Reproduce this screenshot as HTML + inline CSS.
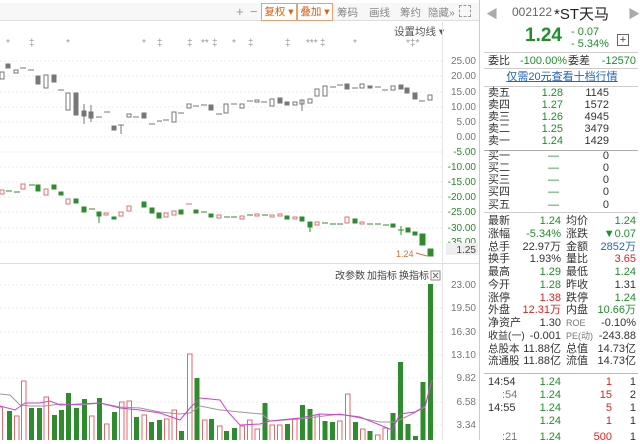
<!DOCTYPE html>
<html><head><meta charset="utf-8"><style>
body{margin:0;width:640px;height:440px;overflow:hidden;background:#fff;font-family:"Liberation Sans","Noto Sans CJK SC",sans-serif;position:relative}
.a{position:absolute;white-space:nowrap}
.tb{font-size:11px;color:#888}
.rp{position:absolute;left:482px;top:0;width:158px;height:440px;font-size:11px}
.r{position:absolute;left:6px;width:148px;height:13px;line-height:13px;color:#333}
.r span{position:absolute}
.g{color:#1f8f2a}.rd{color:#d22}.b{color:#2266bb}
.sep{position:absolute;left:2px;width:154px;height:1px;background:#ccc}
</style></head><body>
<div class="a" style="left:0;top:3px;width:480px;height:17px;background:#f7f7f7;border-bottom:1px solid #ddd"></div>
<div class="a tb" style="left:236px;top:4px;font-size:13px;color:#999">+</div>
<div class="a tb" style="left:250px;top:4px;font-size:13px;color:#999">−</div>
<div class="a tb" style="left:261px;top:3px;width:34px;height:16px;border:1px solid #e8a070;background:#fff;color:#e05a10;line-height:16px;text-align:center;font-size:10.5px">复权 ▾</div>
<div class="a tb" style="left:297px;top:3px;width:34px;height:16px;border:1px solid #e8a070;background:#fff;color:#e05a10;line-height:16px;text-align:center;font-size:10.5px">叠加 ▾</div>
<div class="a tb" style="left:337px;top:5px;font-size:10.5px">筹码</div>
<div class="a tb" style="left:369px;top:5px;font-size:10.5px">画线</div>
<div class="a tb" style="left:400px;top:5px;font-size:10.5px">筹约</div>
<div class="a tb" style="left:428px;top:5px;font-size:10.5px">隐藏»</div>
<div class="a" style="left:459px;top:5px;width:10px;height:10px;border:1px dashed #999"></div>
<div class="a tb" style="left:394px;top:24px;color:#555;font-size:10.5px">设置均线 ▾</div>

<svg class="a" style="left:0;top:0" width="480" height="440">
<g stroke="#eee" stroke-dasharray="2,2">
<line x1="0" x2="442" y1="61" y2="61"/><line x1="0" x2="442" y1="76" y2="76"/><line x1="0" x2="442" y1="92" y2="92"/><line x1="0" x2="442" y1="107" y2="107"/><line x1="0" x2="442" y1="122" y2="122"/><line x1="0" x2="442" y1="137" y2="137"/><line x1="0" x2="442" y1="152" y2="152"/><line x1="0" x2="442" y1="167" y2="167"/><line x1="0" x2="442" y1="182" y2="182"/><line x1="0" x2="442" y1="197" y2="197"/><line x1="0" x2="442" y1="212" y2="212"/><line x1="0" x2="442" y1="228" y2="228"/><line x1="0" x2="442" y1="242" y2="242"/>
<line x1="0" x2="442" y1="285" y2="285"/><line x1="0" x2="442" y1="308" y2="308"/><line x1="0" x2="442" y1="332" y2="332"/><line x1="0" x2="442" y1="355" y2="355"/><line x1="0" x2="442" y1="378" y2="378"/><line x1="0" x2="442" y1="402" y2="402"/><line x1="0" x2="442" y1="425" y2="425"/>
</g>
<line x1="442.5" y1="22" x2="442.5" y2="440" stroke="#e4e4e4"/>
<line x1="0" y1="263.5" x2="480" y2="263.5" stroke="#ddd"/>
<line x1="479.5" y1="0" x2="479.5" y2="440" stroke="#ccc"/>
<g fill="#999" font-size="10" font-family="Liberation Sans">
<text x="6" y="46">*</text><text x="29" y="46">‡</text><text x="66" y="46">*</text><text x="142" y="46">*</text><text x="157" y="46">‡</text><text x="187" y="46">‡</text><text x="201" y="46">**</text><text x="212" y="46">‡</text><text x="232" y="46">*</text><text x="248" y="46">‡</text><text x="285" y="46">‡</text><text x="306" y="46">***</text><text x="320" y="46">‡</text><text x="353" y="46">*</text><text x="406" y="46">*‡*</text>
</g>
<g font-size="10" font-family="Liberation Sans" text-anchor="end">
<g fill="#777"><text x="476" y="64">25.00</text><text x="476" y="79">20.00</text><text x="476" y="95">15.00</text><text x="476" y="110">10.00</text><text x="476" y="125">5.00</text><text x="476" y="140">0.00</text></g>
<g fill="#2a8a2a"><text x="476" y="155">-5.00</text><text x="476" y="170">-10.00</text><text x="476" y="185">-15.00</text><text x="476" y="200">-20.00</text><text x="476" y="215">-25.00</text><text x="476" y="231">-30.00</text><text x="476" y="245">-35.00</text></g>
<rect x="446" y="243" width="32" height="12" fill="#eee"/><text x="476" y="253" fill="#444">1.25</text>
<g fill="#777"><text x="476" y="288">23.00</text><text x="476" y="311">19.50</text><text x="476" y="335">16.30</text><text x="476" y="358">13.10</text><text x="476" y="381">9.82</text><text x="476" y="405">6.58</text><text x="476" y="428">3.34</text></g>
</g>
<g fill="#777" stroke="#777" stroke-width="1">
<rect x="0" y="72" width="4" height="7" fill="#fff"/><rect x="6" y="64" width="4" height="4"/><rect x="14" y="70" width="4" height="3" fill="#fff"/><line x1="20" x2="26" y1="68" y2="68"/><line x1="28" x2="34" y1="70" y2="70"/>
<rect x="36" y="76" width="4" height="8"/><rect x="44" y="75" width="4" height="13" fill="#fff"/><rect x="52" y="75" width="4" height="7"/><line x1="58" x2="64" y1="90" y2="90"/>
<rect x="66" y="93" width="4" height="17" fill="#fff"/><rect x="74" y="93" width="4" height="22"/><rect x="82" y="111" width="4" height="5"/><line x1="84" x2="84" y1="104" y2="124"/><rect x="89" y="112" width="4" height="6"/><line x1="91" x2="91" y1="105" y2="122"/>
<line x1="96" x2="102" y1="117" y2="117"/><line x1="104" x2="110" y1="112" y2="112"/><rect x="112" y="126" width="4" height="4"/><line x1="118" x2="124" y1="125" y2="125"/><line x1="121" x2="121" y1="125" y2="134"/>
<rect x="127" y="114" width="4" height="3" fill="#fff"/><line x1="133" x2="139" y1="117" y2="117"/><rect x="142" y="113" width="4" height="5"/><line x1="149" x2="155" y1="124" y2="124"/><line x1="157" x2="162" y1="121" y2="121"/><line x1="163" x2="169" y1="120" y2="120"/>
<rect x="172" y="112" width="4" height="10" fill="#fff"/><line x1="178" x2="184" y1="113" y2="113"/><rect x="187" y="104" width="4" height="4" fill="#fff"/><line x1="193" x2="199" y1="106" y2="106"/><line x1="201" x2="207" y1="105" y2="105"/>
<rect x="209" y="105" width="4" height="5"/><line x1="216" x2="222" y1="114" y2="114"/><rect x="224" y="104" width="4" height="9" fill="#fff"/><line x1="231" x2="237" y1="104" y2="104"/>
<rect x="240" y="104" width="4" height="4" fill="#fff"/><line x1="247" x2="253" y1="101" y2="101"/><rect x="255" y="100" width="4" height="2" fill="#fff"/><line x1="261" x2="267" y1="102" y2="102"/>
<rect x="270" y="99" width="4" height="7" fill="#fff"/><rect x="278" y="98" width="4" height="5"/><rect x="285" y="102" width="4" height="3"/><rect x="293" y="102" width="4" height="3" fill="#fff"/><rect x="300" y="100" width="4" height="4" fill="#fff"/><line x1="302" x2="302" y1="100" y2="111"/>
<rect x="308" y="99" width="4" height="4" fill="#fff"/><rect x="315" y="89" width="4" height="7" fill="#fff"/><rect x="323" y="86" width="4" height="10" fill="#fff"/><line x1="330" x2="336" y1="87" y2="87"/><line x1="337" x2="343" y1="85" y2="85"/>
<rect x="345" y="84" width="4" height="5"/><line x1="352" x2="358" y1="88" y2="88"/><rect x="360" y="84" width="4" height="4" fill="#fff"/><rect x="368" y="86" width="4" height="2"/><line x1="375" x2="381" y1="87" y2="87"/><line x1="382" x2="388" y1="90" y2="90"/>
<rect x="391" y="86" width="4" height="4" fill="#fff"/><rect x="399" y="85" width="4" height="4"/><rect x="405" y="88" width="4" height="5"/><rect x="413" y="93" width="4" height="6"/><line x1="419" x2="425" y1="101" y2="101"/><rect x="428" y="95" width="4" height="5" fill="#fff"/>
</g>
<g stroke-width="1">
<g fill="#fff" stroke="#e07070">
<rect x="0" y="190" width="4" height="4"/><rect x="21" y="184" width="4" height="5"/><rect x="44" y="189" width="4" height="6"/><rect x="66" y="199" width="4" height="5"/><rect x="104" y="213" width="4" height="2"/><rect x="119" y="212" width="4" height="4"/><rect x="127" y="206" width="4" height="5"/><rect x="164" y="213" width="4" height="4"/><rect x="172" y="211" width="4" height="4"/><line x1="186" x2="192" y1="204" y2="204"/><rect x="217" y="215" width="4" height="3"/><rect x="240" y="216" width="4" height="3"/><rect x="255" y="214" width="4" height="2"/><rect x="270" y="215" width="4" height="2"/><rect x="278" y="214" width="4" height="2"/><rect x="293" y="217" width="4" height="2"/><rect x="315" y="222" width="4" height="3"/><rect x="345" y="217" width="4" height="6"/><rect x="360" y="222" width="4" height="2"/>
</g>
<g fill="#2e8b2e" stroke="#2e8b2e">
<line x1="6" x2="12" y1="191" y2="191"/><line x1="14" x2="20" y1="192" y2="192"/><line x1="29" x2="35" y1="185" y2="185"/><rect x="36" y="185" width="4" height="6"/><rect x="52" y="185" width="4" height="4"/><rect x="59" y="192" width="4" height="3"/><rect x="74" y="199" width="4" height="4"/><rect x="82" y="207" width="4" height="5"/><line x1="89" x2="95" y1="209" y2="209"/><rect x="97" y="212" width="4" height="4"/><line x1="99" x2="99" y1="212" y2="223"/><rect x="112" y="217" width="4" height="2"/><rect x="142" y="202" width="4" height="5"/><rect x="150" y="208" width="4" height="5"/><rect x="157" y="213" width="4" height="5"/><rect x="179" y="210" width="4" height="4"/><rect x="194" y="210" width="4" height="3"/><line x1="201" x2="207" y1="212" y2="212"/><rect x="209" y="214" width="4" height="3"/><line x1="224" x2="230" y1="217" y2="217"/><line x1="231" x2="237" y1="217" y2="217"/><line x1="247" x2="253" y1="215" y2="215"/><line x1="262" x2="268" y1="215" y2="215"/><rect x="285" y="216" width="4" height="3"/><rect x="300" y="217" width="4" height="4"/><rect x="308" y="222" width="4" height="5"/><line x1="310" x2="310" y1="222" y2="232"/><line x1="322" x2="328" y1="223" y2="223"/><line x1="330" x2="336" y1="224" y2="224"/><line x1="337" x2="343" y1="224" y2="224"/><rect x="353" y="219" width="4" height="4"/><line x1="367" x2="373" y1="224" y2="224"/><line x1="375" x2="381" y1="224" y2="224"/><line x1="383" x2="389" y1="225" y2="225"/><rect x="391" y="224" width="4" height="3"/><line x1="401" x2="401" y1="226" y2="235"/><line x1="398" x2="404" y1="230" y2="230"/><rect x="406" y="228" width="4" height="4"/><rect x="413" y="232" width="4" height="3"/><rect x="420" y="234" width="5" height="11"/><rect x="428" y="249" width="5" height="7"/>
</g>
<text x="396" y="257" fill="#d07030" font-size="9" font-family="Liberation Sans">1.24</text>
<line x1="416" y1="253" x2="427" y2="256" stroke="#d07030"/>
</g>
<g stroke-width="1">
<g fill="#fff" stroke="#e06a6a">
<rect x="-2" y="407" width="4.5" height="34"/><rect x="14.5" y="416" width="4.5" height="25"/><rect x="21.5" y="381" width="4.5" height="60"/><rect x="44" y="397" width="4.5" height="44"/><rect x="89.5" y="416" width="4.5" height="25"/><rect x="104.5" y="424" width="4.5" height="17"/><rect x="119.5" y="402" width="4.5" height="39"/><rect x="127" y="401" width="4.5" height="40"/><rect x="142" y="415" width="4.5" height="26"/><rect x="164.5" y="419" width="4.5" height="22"/><rect x="172" y="410" width="4.5" height="31"/><rect x="187.5" y="354" width="4.5" height="87"/><rect x="202.5" y="420" width="4.5" height="21"/><rect x="217.5" y="426" width="4.5" height="15"/><rect x="240" y="426" width="4.5" height="15"/><rect x="247.5" y="420" width="4.5" height="21"/><rect x="255" y="429" width="4.5" height="12"/><rect x="270" y="425" width="4.5" height="16"/><rect x="277.5" y="425" width="4.5" height="16"/><rect x="292.5" y="419" width="4.5" height="22"/><rect x="315" y="415" width="4.5" height="26"/><rect x="337.5" y="421" width="4.5" height="20"/><rect x="345.5" y="394" width="4.5" height="47"/><rect x="360.5" y="429" width="4.5" height="12"/><rect x="375.5" y="435" width="4.5" height="6"/><rect x="383" y="428" width="4.5" height="13"/>
</g>
<g fill="#2e8b2e">
<rect x="7" y="411" width="5" height="29"/><rect x="29" y="408" width="5" height="32"/><rect x="37" y="408" width="5" height="32"/><rect x="52" y="415" width="5" height="25"/><rect x="59" y="410" width="5" height="30"/><rect x="66" y="393" width="5" height="47"/><rect x="74" y="408" width="5" height="32"/><rect x="82" y="399" width="5" height="41"/><rect x="97" y="398" width="5" height="42"/><rect x="112" y="412" width="5" height="28"/><rect x="134" y="417" width="5" height="23"/><rect x="149" y="422" width="5" height="18"/><rect x="157" y="420" width="5" height="20"/><rect x="179" y="431" width="5" height="9"/><rect x="194.5" y="378" width="5" height="62"/><rect x="209" y="419" width="5" height="21"/><rect x="224" y="431" width="5" height="9"/><rect x="232" y="428" width="5" height="12"/><rect x="262.5" y="403" width="5" height="37"/><rect x="285" y="424" width="5" height="16"/><rect x="300" y="405" width="5" height="35"/><rect x="307.5" y="409" width="5" height="31"/><rect x="322.5" y="421" width="5" height="19"/><rect x="330" y="422" width="5" height="18"/><rect x="353" y="422" width="5" height="18"/><rect x="367.5" y="431" width="5" height="9"/><rect x="390.5" y="413" width="5" height="27"/><rect x="398" y="362" width="5" height="78"/><rect x="405.5" y="424" width="5" height="16"/><rect x="413" y="436" width="5" height="4"/><rect x="420.5" y="382" width="5" height="58"/><rect x="428" y="284" width="5" height="156"/>
</g>
<polyline fill="none" stroke="#999" points="0,394 10,395 20,405 30,406 45,406 60,404 80,405 100,403 120,407 140,408 160,412 180,414 190,413 200,406 220,410 250,413 262,414 270,421 300,419 340,414 360,418 380,422 395,422 410,415 425,407 432,380"/>
<polyline fill="none" stroke="#d040d0" points="0,406 15,410 25,403 40,403 50,401 60,405 80,404 100,403 120,408 140,410 160,413 180,420 190,408 200,398 220,400 228,412 240,425 260,424 270,421 300,418 320,414 345,415 360,417 380,425 392,430 400,414 415,412 425,406 432,380"/>
</g>
<g font-size="10" font-family="Liberation Sans,Noto Sans CJK SC,sans-serif" fill="#444">
<text x="335" y="279">改参数</text><text x="367" y="279">加指标</text><text x="399" y="279">换指标</text>
</g>
<rect x="431" y="271" width="9" height="9" fill="#fff" stroke="#888"/><path d="M433 273l5 5M438 273l-5 5" stroke="#666"/>
</svg>

<div class="rp">
<div class="a" style="left:4px;top:5px;color:#aaa;font-size:12px">◀</div>
<div class="a" style="left:30px;top:5px;color:#666;font-size:12px">002122</div>
<div class="a" style="left:72px;top:3px;color:#222;font-size:15px">*ST天马</div>
<div class="a" style="left:146px;top:5px;color:#aaa;font-size:12px">▶</div>
<div class="a g" style="left:43px;top:25px;font-size:19px;font-weight:bold">1.24</div>
<div class="a g" style="left:89px;top:26px;font-size:11px">- 0.07</div>
<div class="a g" style="left:89px;top:38px;font-size:11px">- 5.34%</div>
<div class="a" style="left:135px;top:34px;width:10px;height:10px;border:1px solid #666;font-size:11px;line-height:10px;text-align:center;color:#444">+</div>
<div class="sep" style="top:52px"></div>
<div class="r" style="top:55px"><span style="left:0">委比</span><span class="g" style="left:32px">-100.00%</span><span style="left:80px">委差</span><span class="g" style="right:0">-12570</span></div>
<div class="sep" style="top:68px"></div>
<div class="r" style="top:71px;text-align:center;color:#2266bb;text-decoration:underline">仅需20元查看十档行情</div>
<div class="sep" style="top:86px"></div>
<div class="r" style="top:87px"><span style="left:0">卖五</span><span class="g" style="right:73px">1.28</span><span style="right:27px">1145</span></div>
<div class="r" style="top:99px"><span style="left:0">卖四</span><span class="g" style="right:73px">1.27</span><span style="right:27px">1572</span></div>
<div class="r" style="top:111px"><span style="left:0">卖三</span><span class="g" style="right:73px">1.26</span><span style="right:27px">4945</span></div>
<div class="r" style="top:123px"><span style="left:0">卖二</span><span class="g" style="right:73px">1.25</span><span style="right:27px">3479</span></div>
<div class="r" style="top:135px"><span style="left:0">卖一</span><span class="g" style="right:73px">1.24</span><span style="right:27px">1429</span></div>
<div class="sep" style="top:150px;background:#aaa"></div>
<div class="r" style="top:150px"><span style="left:0">买一</span><span class="g" style="right:77px">—</span><span style="right:27px">0</span></div>
<div class="r" style="top:162px"><span style="left:0">买二</span><span class="g" style="right:77px">—</span><span style="right:27px">0</span></div>
<div class="r" style="top:174px"><span style="left:0">买三</span><span class="g" style="right:77px">—</span><span style="right:27px">0</span></div>
<div class="r" style="top:186px"><span style="left:0">买四</span><span class="g" style="right:77px">—</span><span style="right:27px">0</span></div>
<div class="r" style="top:199px"><span style="left:0">买五</span><span class="g" style="right:77px">—</span><span style="right:27px">0</span></div>
<div class="sep" style="top:212px"></div>
<div class="r" style="top:215px"><span style="left:0">最新</span><span class="g" style="right:75px">1.24</span><span style="left:78px">均价</span><span class="g" style="right:0">1.24</span></div>
<div class="r" style="top:228px"><span style="left:0">涨幅</span><span class="g" style="right:75px">-5.34%</span><span style="left:78px">涨跌</span><span class="g" style="right:0">▼0.07</span></div>
<div class="r" style="top:241px"><span style="left:0">总手</span><span style="right:75px">22.97万</span><span style="left:78px">金额</span><span class="b" style="right:0">2852万</span></div>
<div class="r" style="top:253px"><span style="left:0">换手</span><span style="right:75px">1.93%</span><span style="left:78px">量比</span><span class="rd" style="right:0">3.65</span></div>
<div class="r" style="top:266px"><span style="left:0">最高</span><span class="g" style="right:75px">1.29</span><span style="left:78px">最低</span><span class="g" style="right:0">1.24</span></div>
<div class="r" style="top:279px"><span style="left:0">今开</span><span class="g" style="right:75px">1.28</span><span style="left:78px">昨收</span><span style="right:0">1.31</span></div>
<div class="r" style="top:292px"><span style="left:0">涨停</span><span class="rd" style="right:75px">1.38</span><span style="left:78px">跌停</span><span class="g" style="right:0">1.24</span></div>
<div class="r" style="top:304px"><span style="left:0">外盘</span><span class="rd" style="right:75px">12.31万</span><span style="left:78px">内盘</span><span class="g" style="right:0">10.66万</span></div>
<div class="r" style="top:317px"><span style="left:0">净资产</span><span style="right:75px">1.30</span><span style="left:78px;font-size:9px;color:#777">ROE</span><span style="right:0">-0.10%</span></div>
<div class="r" style="top:330px"><span style="left:0;font-size:10px">收益(一)</span><span style="right:75px">-0.001</span><span style="left:78px;font-size:9px;color:#777">PE(动)</span><span style="right:0">-243.88</span></div>
<div class="r" style="top:343px"><span style="left:0;font-size:10.5px">总股本</span><span style="right:75px">11.88亿</span><span style="left:78px">总值</span><span style="right:0">14.73亿</span></div>
<div class="r" style="top:355px"><span style="left:0;font-size:10.5px">流通股</span><span style="right:75px">11.88亿</span><span style="left:78px">流值</span><span style="right:0">14.73亿</span></div>
<div class="sep" style="top:373px;background:#bbb"></div>
<div class="r" style="top:376px"><span style="left:0">14:54</span><span class="g" style="right:75px">1.24</span><span class="rd" style="right:24px">1</span><span style="right:0">1</span></div>
<div class="r" style="top:389px"><span style="left:14px;color:#777">:54</span><span class="g" style="right:75px">1.24</span><span class="rd" style="right:24px">15</span><span style="right:0">2</span></div>
<div class="r" style="top:402px"><span style="left:0">14:55</span><span class="g" style="right:75px">1.24</span><span class="rd" style="right:24px">5</span><span style="right:0">1</span></div>
<div class="r" style="top:415px"><span class="g" style="right:75px">1.24</span><span class="rd" style="right:24px">1</span><span style="right:0">1</span></div>
<div class="r" style="top:431px"><span style="left:14px;color:#777">:21</span><span class="g" style="right:75px">1.24</span><span class="rd" style="right:24px">500</span><span style="right:0">1</span></div>
</div>
</body></html>
